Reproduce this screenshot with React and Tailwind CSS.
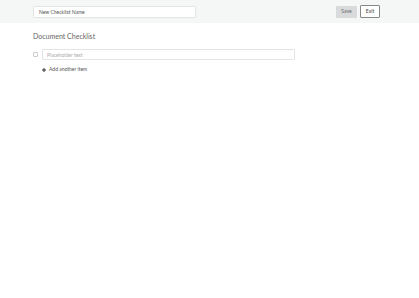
export default function App() {
  return (
    <div className="min-h-screen w-full bg-white font-['Lato',sans-serif] text-[#555]">
      {/* Top bar */}
      <div className="flex h-[23px] items-center justify-between bg-[#f5f6f6] pl-[33px] pr-[39px]">
        <input
          className="h-[12px] w-[163px] rounded-[1px] border border-[#e4e4e4] bg-white px-[5px] text-[5px] text-[#555] outline-none"
          defaultValue="New Checklist Name"
        />
        <div className="flex items-center gap-[3px]">
          <button className="h-[12px] w-[21px] rounded-[1px] bg-[#d9dadb] text-[5px] text-[#666]">
            Save
          </button>
          <button className="h-[13px] w-[20px] rounded-[1px] border border-[#888] bg-white text-[5px] text-[#444]">
            Exit
          </button>
        </div>
      </div>

      {/* Body */}
      <div className="pl-[33px] pt-[7px]">
        <h1 className="text-[7px] font-normal leading-[12px] text-[#666]">Document Checklist</h1>
        <div className="mt-[7px] flex items-center">
          <span className="mr-[4px] h-[5px] w-[5px] rounded-[1px] border border-[#ccc] bg-white" />
          <input
            className="h-[11px] w-[253px] rounded-[1px] border border-[#e4e4e4] bg-white px-[4px] text-[5px] text-[#555] outline-none placeholder:text-[#aaa]"
            placeholder="Placeholder text"
          />
        </div>
        <div className="mt-[6px] flex items-center pl-[9px] text-[5px] text-[#555]">
          <svg className="mr-[3px] h-[4px] w-[4px]" viewBox="0 0 4 4">
            <path d="M1.5 0h1v1.5H4v1H2.5V4h-1V2.5H0v-1h1.5z" fill="#333" />
          </svg>
          Add another item
        </div>
      </div>
    </div>
  );
}
